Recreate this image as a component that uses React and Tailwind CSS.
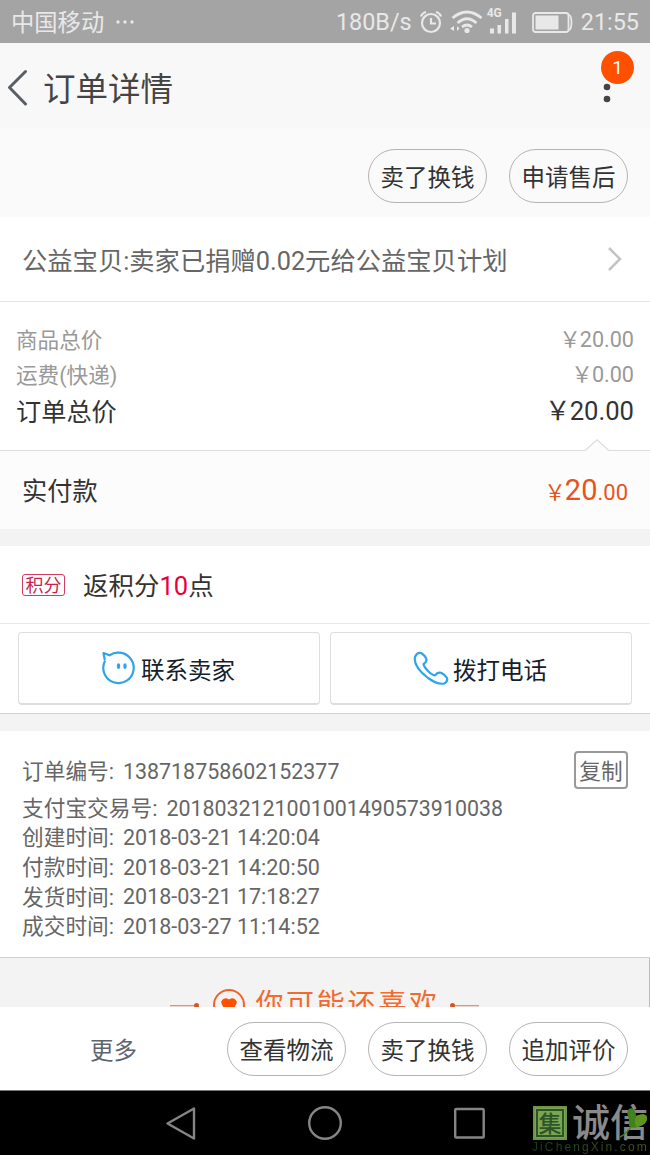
const prices = [
  { label: '商品总价', value: '20.00' },
  { label: '运费(快递)', value: '0.00' },
];

const times = [
  { label: '创建时间:', value: '2018-03-21 14:20:04' },
  { label: '付款时间:', value: '2018-03-21 14:20:50' },
  { label: '发货时间:', value: '2018-03-21 17:18:27' },
  { label: '成交时间:', value: '2018-03-27 11:14:52' },
];

function PillButton({ children }) {
  return (
    <button className="flex h-[54px] w-[119px] shrink-0 items-center justify-center rounded-full border border-[#b4b4b4] pt-[6px] text-[23.5px] leading-none text-[#333]">
      {children}
    </button>
  );
}

function StatusBar() {
  return (
    <div className="flex h-[43px] items-center bg-[#a4a4a4] pl-[11px] pr-[11px] text-[23.3px] leading-none text-[#e8e8e8]">
      <span className="pt-[4px]">中国移动</span>
      <svg className="ml-[12px]" width="18" height="4" viewBox="0 0 18 4" fill="currentColor">
        <circle cx="2" cy="2" r="1.7" />
        <circle cx="9" cy="2" r="1.7" />
        <circle cx="16" cy="2" r="1.7" />
      </svg>
      <span className="ml-auto pt-[3px] text-[23.4px]">180B/s</span>
      {/* alarm */}
      <svg className="ml-[7px]" width="24" height="24" viewBox="0 0 24 24" fill="none" stroke="currentColor" strokeWidth="2.2">
        <circle cx="12" cy="13" r="9" />
        <path d="M12 8v5.5h5M2 6.5Q3 3 7 2M22 6.5Q21 3 17 2" />
      </svg>
      {/* wifi */}
      <svg className="ml-[6px]" width="34" height="24" viewBox="0 0 34 24" fill="none" stroke="currentColor" strokeWidth="2.800">
        <path d="M3.500 8Q18 -4 32.500 8M8.500 13Q18 4.500 27.500 13M13 17Q18 13 23 17" />
        <circle cx="18" cy="20.500" r="2.600" fill="currentColor" stroke="none" />
        <path d="M5 16v5l-4-2.500zM8 16v5l2.500-2.500z" fill="currentColor" stroke="none" />
      </svg>
      {/* signal */}
      <div className="ml-[4px] flex h-[31px] items-start pt-[1px]">
        <span className="text-[12px] font-bold leading-[12px]">4G</span>
        <svg className="-ml-[13px] mt-[4px]" width="28" height="23" viewBox="0 0 28 23" fill="currentColor">
          <path d="M1 17.500h4v5H1zM8.500 14h3.500v8.500h-3.500zM16 8h3.500v14.500h-3.500zM23 1.500h4v21h-4z" />
        </svg>
      </div>
      {/* battery */}
      <svg className="ml-[15px] mt-[2px]" width="41" height="21" viewBox="0 0 41 21">
        <rect x="1" y="1" width="35.500" height="19" rx="2.500" fill="none" stroke="currentColor" strokeWidth="1.800" />
        <rect x="3.500" y="3.500" width="23" height="14" fill="currentColor" />
        <path d="M36.500 2.500q3 1 3 8t-3 8" fill="none" stroke="currentColor" strokeWidth="1.800" />
      </svg>
      <span className="ml-[8px] pt-[3px] text-[23.4px]">21:55</span>
    </div>
  );
}

function Header() {
  return (
    <header className="relative flex h-[85px] items-center bg-[#f8f8f8] pl-[7px] pr-[39px]">
      <svg className="mt-[2px]" width="22" height="38" viewBox="0 0 22 38" fill="none" stroke="#5a5f66" strokeWidth="3" strokeLinecap="round" strokeLinejoin="round">
        <path d="M18.500 3.500L2.500 19.500L18.500 36" />
      </svg>
      <h1 className="ml-[14px] mt-[9px] text-[32.5px] leading-none text-[#444]">订单详情</h1>
      <svg className="ml-auto mt-[15px]" width="8" height="20" viewBox="0 0 8 20" fill="#444">
        <circle cx="4" cy="4" r="3.300" />
        <circle cx="4" cy="16" r="3.300" />
      </svg>
      <span className="absolute right-[16px] top-[7.500px] flex size-[33px] items-center justify-center rounded-full bg-[#ff5000] text-[19px] leading-none text-white">
        1
      </span>
    </header>
  );
}

function Prices() {
  return (
    <section className="relative flex h-[149px] flex-col border-b border-[#dcdcdc] pl-[16px] pr-[16px] pt-[20px]">
      {prices.map((row) => (
        <div key={row.label} className="flex h-[35px] items-center justify-between text-[21.6px] leading-none text-[#999]">
          <span className="pt-[2px]">{row.label}</span>
          <span>
            <span className="mr-[-1px]">￥</span>
            {row.value}
          </span>
        </div>
      ))}
      <div className="flex h-[39px] items-center justify-between text-[25.2px] leading-none text-[#333]">
        <span className="pt-[3px]">订单总价</span>
        <span className="text-[25.6px]">
          <span className="mr-[-1px]">￥</span>20.00
        </span>
      </div>
      {/* notch pointing at the total */}
      <svg className="absolute -bottom-[2px] right-[41px]" width="24" height="13" viewBox="0 0 24 13">
        <path d="M0 11.500L12 0.800L24 11.500V13H0z" fill="#fcfcfc" />
        <path d="M0 11.500L12 0.800L24 11.500" fill="none" stroke="#dcdcdc" strokeWidth="1.200" />
      </svg>
    </section>
  );
}

function ContactButtons() {
  return (
    <section className="flex h-[90px] gap-[10px] border-b border-[#d2d2d2] px-[18px] pt-[8px] text-[23.5px] leading-none text-[#14202b]">
      <button className="flex h-[73px] flex-1 items-center justify-center rounded-[4px] border border-b-2 border-[#dedede] pr-[2px]">
        <svg width="34" height="34" viewBox="0 0 34 34" fill="none" stroke="#2ea5e8" strokeWidth="2.200">
          <path d="M3.800 9L2.500 2L8.500 4.300Q13 1.500 17 1.700A15.200 15.200 0 1 1 4.200 9.500" strokeLinejoin="round" />
          <path d="M17.500 13.800v2.500M24 13.800v2.500" strokeWidth="3.200" strokeLinecap="round" />
        </svg>
        <span className="ml-[6px] pt-[8px]">联系卖家</span>
      </button>
      <button className="flex h-[73px] flex-1 items-center justify-center rounded-[4px] border border-b-2 border-[#dedede] pr-[2px]">
        <svg width="36" height="34" viewBox="0 0 36 34" fill="none" stroke="#2ea5e8" strokeWidth="2.200" strokeLinejoin="round">
          <path d="M2 6Q4 1 8 2Q13 5 13.500 9Q13 12 10.500 13Q11 16 15 20Q19 24 22 24.500Q24 21.500 27 21.500Q31 22.500 34 27Q35 31 31 32.500Q25 34 15 27Q0 15 2 6Z" />
        </svg>
        <span className="ml-[4px] pt-[8px]">拨打电话</span>
      </button>
    </section>
  );
}

function OrderInfo() {
  return (
    <section className="flex h-[227px] flex-col border-b border-[#d2d2d2] pl-[22px] pr-[22px] pt-[20px] text-[21.7px] leading-none text-[#666]">
      <div className="flex h-[39px] items-center">
        <span className="pt-[2px]">订单编号:</span>
        <span className="ml-[9px] pt-[2px] text-[21.4px]">138718758602152377</span>
        <button className="mb-[2px] ml-auto flex h-[38px] w-[54px] items-center justify-center rounded-[4px] border-2 border-[#999] pt-[4px]">
          复制
        </button>
      </div>
      <div className="flex h-[33px] items-center">
        <span className="pt-[4px]">支付宝交易号:</span>
        <span className="ml-[9px] pt-[4px] text-[21.4px]">2018032121001001490573910038</span>
      </div>
      {times.map((row) => (
        <div key={row.label} className="flex h-[29.6px] items-center">
          <span className="pt-[1px]">{row.label}</span>
          <span className="ml-[9px] text-[21.5px]">{row.value}</span>
        </div>
      ))}
    </section>
  );
}

function Recommend() {
  return (
    <section className="flex h-[49px] items-start justify-center overflow-hidden border-r border-[#bbb] bg-[#f3f3f3] pt-[28px] text-[28px] leading-none text-[#f26a2e]">
      <svg className="mt-[16px]" width="30" height="8" viewBox="0 0 30 8" fill="#d9541e">
        <path d="M0 3h26v1.300H0z" opacity="0.600" />
        <circle cx="26.500" cy="3.500" r="2.500" />
      </svg>
      <svg className="ml-[12px] mt-[2px]" width="34" height="34" viewBox="0 0 34 34">
        <circle cx="17" cy="17" r="15" fill="none" stroke="#f0622a" strokeWidth="2" />
        <path d="M17 25Q8 17 9.500 13Q12 8.500 17 11.500Q22 8.500 24.500 13Q26 17 17 25Z" fill="#ff5000" />
      </svg>
      <span className="ml-[9px] mt-[5px] tracking-[2.7px]">你可能还喜欢</span>
      <svg className="ml-[9px] mt-[16px]" width="30" height="8" viewBox="0 0 30 8" fill="#d9541e">
        <path d="M4 3h26v1.300H4z" opacity="0.600" />
        <circle cx="3.500" cy="3.500" r="2.500" />
      </svg>
    </section>
  );
}

function Watermark() {
  return (
    <div className="ml-auto flex w-[118px] flex-col overflow-hidden pt-[14px]">
      <div className="flex h-[36px] items-center">
        <span className="ml-[1px] flex size-[34px] shrink-0 items-center justify-center border-2 border-[#6f9648] bg-[#7da453] p-px">
          <span className="flex size-full items-center justify-center border-2 border-[#2b5526] pt-[3px] text-[23px] font-medium leading-none text-[#2b5526]">
            集
          </span>
        </span>
        <span className="relative ml-[5px] whitespace-nowrap text-[38px] font-medium leading-[34px] text-[#8a8a8a]">
          诚信
          <svg className="absolute left-[48px] top-[1px]" width="28" height="32" viewBox="0 0 28 32">
            <path d="M9 13Q5 2 11 1Q16 3 16 9Q25 5 27 10Q28 17 18 20Q12 22 9 19Z" fill="#43811d" />
            <path d="M16 9Q25 5 27 10Q28 17 18 20Q13 19 16 9Z" fill="#5f951f" />
            <path d="M12 18Q8 26 0 30" stroke="#43811d" strokeWidth="1.500" fill="none" />
          </svg>
        </span>
      </div>
      <span className="whitespace-nowrap bg-linear-to-r from-[#123d18] to-[#4b5716] bg-clip-text font-['Liberation_Sans'] text-[12px] leading-[15px] tracking-[2.1px] text-transparent">
        JiChengXin.com
      </span>
    </div>
  );
}

function NavBar() {
  return (
    <nav className="flex h-[65px] border-t border-[#777] bg-black text-[#858585]">
      <svg className="ml-[164px] mt-[15px]" width="34" height="36" viewBox="0 0 34 36" fill="none" stroke="currentColor" strokeWidth="2.400" strokeLinejoin="round">
        <path d="M30 2.500V32.500L3.500 17.500Z" />
      </svg>
      <svg className="ml-[109px] mt-[14px]" width="36" height="36" viewBox="0 0 36 36" fill="none" stroke="currentColor" strokeWidth="2.400">
        <circle cx="18" cy="18" r="15.800" />
      </svg>
      <svg className="ml-[110px] mt-[16px]" width="34" height="34" viewBox="0 0 34 34" fill="none" stroke="currentColor" strokeWidth="2.400">
        <rect x="2.200" y="2" width="28.500" height="28.500" rx="1" />
      </svg>
      <Watermark />
    </nav>
  );
}

export default function App() {
  return (
    <div className="flex h-[1155px] w-[650px] flex-col overflow-hidden bg-white font-['Roboto','Noto_Sans_CJK_SC',sans-serif]">
      <StatusBar />
      <Header />

      <div className="flex h-[89px] items-center justify-end gap-[22px] bg-[#fafafa] pr-[22px] pt-[6px]">
        <PillButton>卖了换钱</PillButton>
        <PillButton>申请售后</PillButton>
      </div>

      <div className="flex h-[85px] items-center justify-between border-b border-[#e4e4e4] pl-[22px] pr-[28px] text-[25.3px] leading-none text-[#666]">
        <span className="pt-[5px]">公益宝贝:卖家已捐赠0.02元给公益宝贝计划</span>
        <svg width="16" height="26" viewBox="0 0 16 26" fill="none" stroke="#c4c4c4" strokeWidth="2.500">
          <path d="M3 2L14 13L3 24" />
        </svg>
      </div>

      <Prices />

      <div className="flex h-[78px] items-center justify-between bg-[#fcfcfc] pl-[22px] pr-[22px] leading-none">
        <span className="pt-[3px] text-[25.2px] text-[#333]">实付款</span>
        <span className="text-[22px] text-[#e6541a]">
          <span className="mr-[-1px] text-[21.5px]">￥</span>
          <span className="text-[29px]">20</span>.00
        </span>
      </div>

      <div className="h-[17px] bg-[#f3f3f3]" />

      <div className="flex h-[78px] items-center border-b border-[#e8e8e8] pl-[22px] text-[25.5px] leading-none text-[#333]">
        <span className="flex h-[22px] w-[43px] items-center justify-center rounded-[3px] border border-[#d23c63] pt-[2px] text-[18px] text-[#cc1f4d]">
          积分
        </span>
        <span className="ml-[18px] pt-[5px]">
          返积分<span className="text-[#e6003c]">10</span>点
        </span>
      </div>

      <ContactButtons />
      <div className="h-[17px] bg-[#f3f3f3]" />
      <OrderInfo />
      <Recommend />

      <div className="flex h-[83px] items-center gap-[22px] pr-[22px]">
        <span className="ml-[90px] mr-auto pt-[6px] text-[23.5px] leading-none text-[#5f646e]">更多</span>
        <PillButton>查看物流</PillButton>
        <PillButton>卖了换钱</PillButton>
        <PillButton>追加评价</PillButton>
      </div>

      <NavBar />
    </div>
  );
}
